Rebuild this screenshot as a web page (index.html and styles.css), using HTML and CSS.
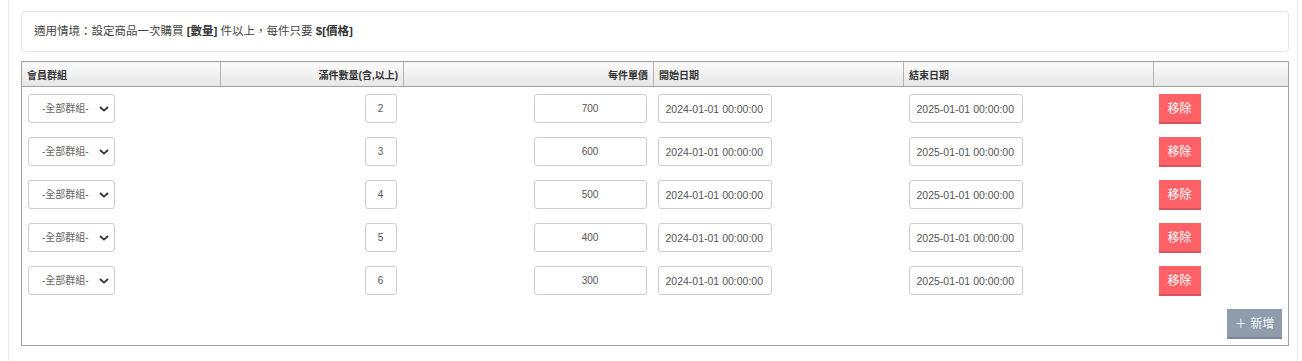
FILE: index.html
```html
<!DOCTYPE html>
<html lang="zh-Hant">
  <head>
    <meta charset="UTF-8" />
    <title>大量購買優惠</title>
    <link rel="stylesheet" href="styles.css">
  </head>
  <body>
    <div class="page">
      <div class="note">
        適用情境：設定商品一次購買 <b>[數量]</b> 件以上，每件只要 <b>$[價格]</b>
      </div>

      <table class="rules">
        <colgroup>
          <col class="c-group" />
          <col class="c-qty" />
          <col class="c-price" />
          <col class="c-date" />
          <col class="c-date" />
          <col class="c-act" />
        </colgroup>
        <thead>
          <tr>
            <th>會員群組</th>
            <th class="r">滿件數量(含,以上)</th>
            <th class="r">每件單價</th>
            <th>開始日期</th>
            <th>結束日期</th>
            <th></th>
          </tr>
        </thead>
        <tbody>
          <tr>
            <td>
              <span class="pick">
                <select><option>-全部群組-</option></select>
                <svg class="chev" viewBox="0 0 10 6" width="10" height="6"><path d="M1 1l4 3.6L9 1" /></svg>
              </span>
            </td>
            <td class="r"><input class="f qty" value="2" /></td>
            <td class="r"><input class="f price" value="700" /></td>
            <td class="start"><input class="f date" value="2024-01-01 00:00:00" /></td>
            <td><input class="f date" value="2025-01-01 00:00:00" /></td>
            <td><button class="btn remove">移除</button></td>
          </tr>
          <tr>
            <td>
              <span class="pick">
                <select><option>-全部群組-</option></select>
                <svg class="chev" viewBox="0 0 10 6" width="10" height="6"><path d="M1 1l4 3.6L9 1" /></svg>
              </span>
            </td>
            <td class="r"><input class="f qty" value="3" /></td>
            <td class="r"><input class="f price" value="600" /></td>
            <td class="start"><input class="f date" value="2024-01-01 00:00:00" /></td>
            <td><input class="f date" value="2025-01-01 00:00:00" /></td>
            <td><button class="btn remove">移除</button></td>
          </tr>
          <tr>
            <td>
              <span class="pick">
                <select><option>-全部群組-</option></select>
                <svg class="chev" viewBox="0 0 10 6" width="10" height="6"><path d="M1 1l4 3.6L9 1" /></svg>
              </span>
            </td>
            <td class="r"><input class="f qty" value="4" /></td>
            <td class="r"><input class="f price" value="500" /></td>
            <td class="start"><input class="f date" value="2024-01-01 00:00:00" /></td>
            <td><input class="f date" value="2025-01-01 00:00:00" /></td>
            <td><button class="btn remove">移除</button></td>
          </tr>
          <tr>
            <td>
              <span class="pick">
                <select><option>-全部群組-</option></select>
                <svg class="chev" viewBox="0 0 10 6" width="10" height="6"><path d="M1 1l4 3.6L9 1" /></svg>
              </span>
            </td>
            <td class="r"><input class="f qty" value="5" /></td>
            <td class="r"><input class="f price" value="400" /></td>
            <td class="start"><input class="f date" value="2024-01-01 00:00:00" /></td>
            <td><input class="f date" value="2025-01-01 00:00:00" /></td>
            <td><button class="btn remove">移除</button></td>
          </tr>
          <tr>
            <td>
              <span class="pick">
                <select><option>-全部群組-</option></select>
                <svg class="chev" viewBox="0 0 10 6" width="10" height="6"><path d="M1 1l4 3.6L9 1" /></svg>
              </span>
            </td>
            <td class="r"><input class="f qty" value="6" /></td>
            <td class="r"><input class="f price" value="300" /></td>
            <td class="start"><input class="f date" value="2024-01-01 00:00:00" /></td>
            <td><input class="f date" value="2025-01-01 00:00:00" /></td>
            <td><button class="btn remove">移除</button></td>
          </tr>
          <tr class="foot">
            <td colspan="6" class="r"><button class="btn add">＋ 新增</button></td>
          </tr>
        </tbody>
      </table>
    </div>
  </body>
</html>
```

FILE: styles.css
```css
body {
  margin: 0;
  background: #fff;
  color: #333;
  font-family: "Liberation Sans", "Noto Sans CJK TC", sans-serif;
  font-size: 12px;
}

.page {
  margin: 0 4px 0 8px;
  min-height: 361px;
  box-sizing: border-box;
  border-left: 1px solid #ececec;
  border-right: 1px solid #ececec;
  padding: 11px 8px 0 12px;
}

/* info strip */
.note {
  border: 1px solid #e6e6e6;
  border-radius: 4px;
  height: 39px;
  line-height: 39px;
  padding: 0 12px;
  font-size: 11.5px;
  color: #444;
}

.note b {
  color: #333;
}

/* table */
.rules {
  margin-top: 9px;
  width: 100%;
  border-collapse: collapse;
  table-layout: fixed;
  border: 1px solid #a3a3a3;
}

.c-group { width: 199px; }
.c-qty { width: 183px; }
.c-price { width: 250px; }
.c-date { width: 250px; }
.c-act { width: auto; }

.rules th {
  height: 24px;
  padding: 0 5px;
  text-align: left;
  font-size: 10px;
  font-weight: bold;
  color: #333;
  background: linear-gradient(#fbfbfb, #e6e6e6);
  border-right: 1px solid #b3b3b3;
  border-bottom: 1px solid #a3a3a3;
}

.rules th:last-child {
  border-right: 0;
}

.rules td {
  height: 43px;
  padding: 0 6px 0 5px;
  vertical-align: middle;
}

.rules td:first-child {
  padding-left: 6px;
}

.rules td.start {
  padding-left: 4px;
}

.rules td.r {
  text-align: right;
  padding-right: 7px;
}

.rules th.r {
  text-align: right;
}

.rules tr.foot td {
  height: 43px;
  padding: 0 6px 0 0;
}

/* fields */
.f {
  box-sizing: border-box;
  height: 29px;
  border: 1px solid #cdcdcd;
  border-radius: 3px;
  padding: 0 7px;
  font-family: inherit;
  font-size: 10px;
  color: #555;
  vertical-align: middle;
  outline: none;
}

.qty {
  width: 32px;
  text-align: center;
  padding: 0;
}

.price {
  width: 113px;
  text-align: center;
}

.date {
  width: 114px;
  padding: 0 7px;
  font-size: 10.5px;
}

.pick {
  position: relative;
  display: inline-block;
  vertical-align: middle;
}

.pick select {
  appearance: none;
  -webkit-appearance: none;
  box-sizing: border-box;
  width: 87px;
  height: 29px;
  border: 1px solid #cdcdcd;
  border-radius: 3px;
  background: #fff;
  padding: 0 0 0 13px;
  font-family: inherit;
  font-size: 10px;
  color: #666;
  display: block;
}

.chev {
  position: absolute;
  right: 6px;
  top: 12px;
  fill: none;
  stroke: #333;
  stroke-width: 1.8;
  pointer-events: none;
}

/* buttons */
.btn {
  border: 0;
  color: #fff;
  font-family: inherit;
  font-size: 12px;
  cursor: pointer;
  vertical-align: middle;
}

.remove {
  width: 42px;
  height: 30px;
  padding: 0;
  background: #ff6166;
  border-bottom: 2px solid #d9545a;
}

.add {
  width: 55px;
  height: 30px;
  padding: 0;
  background: #8f9cac;
  border-bottom: 2px solid #7b8697;
  color: #f4f6f8;
}
```
